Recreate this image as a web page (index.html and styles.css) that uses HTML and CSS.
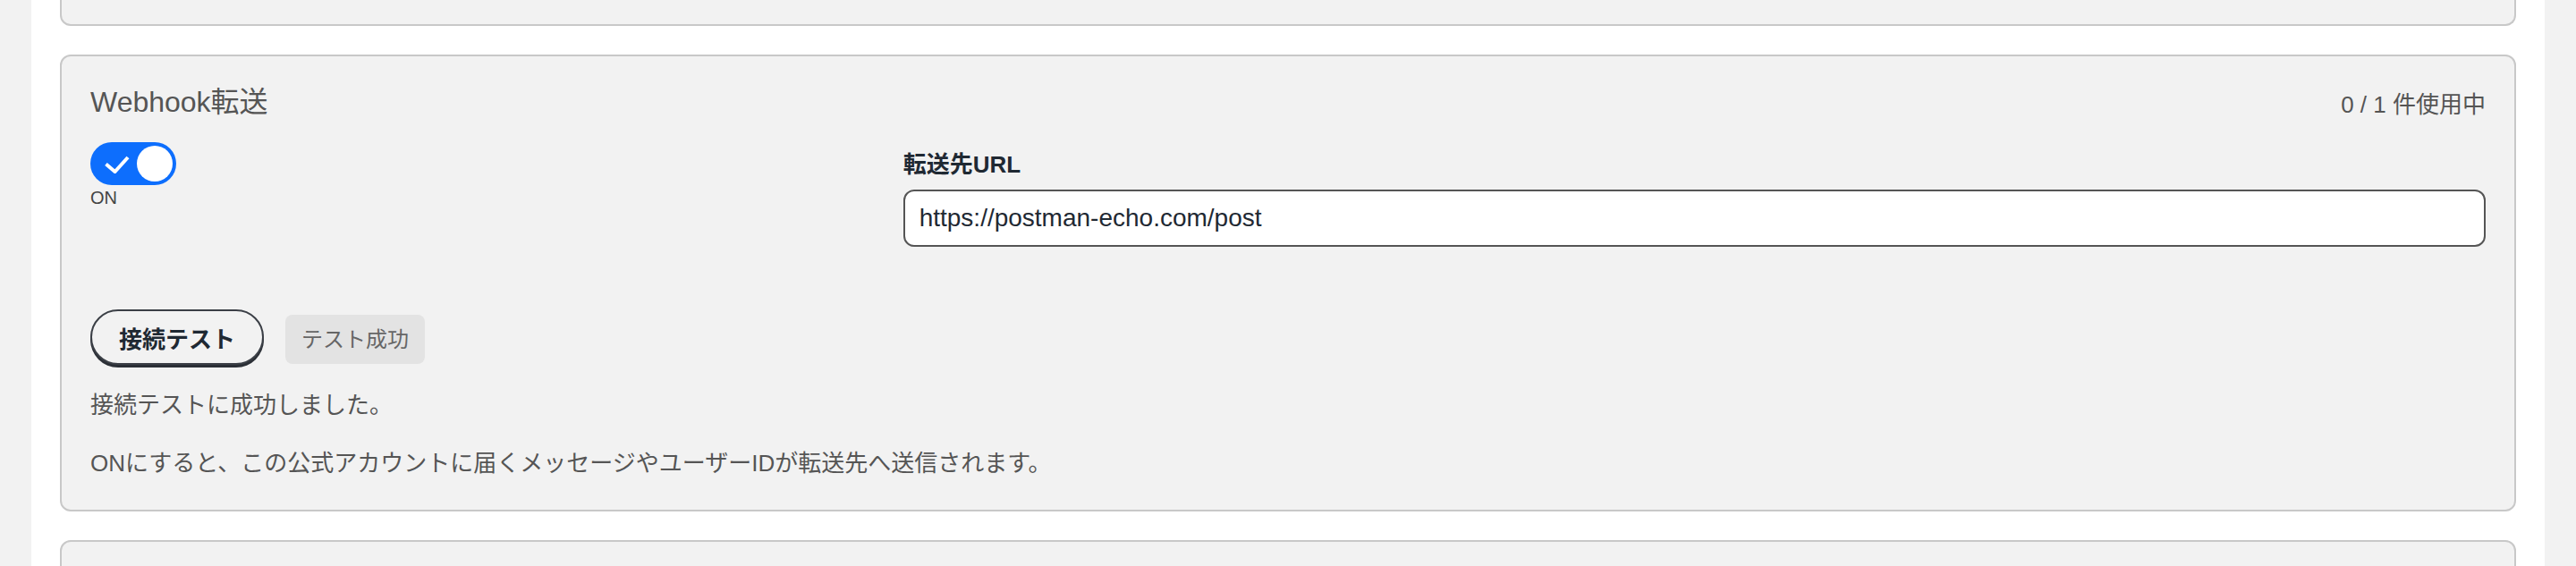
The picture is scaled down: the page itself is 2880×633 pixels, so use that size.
FILE: index.html
```html
<!DOCTYPE html>
<html lang="ja">
<head>
<meta charset="utf-8">
<title>Webhook転送</title>
<link rel="stylesheet" href="styles.css">
</head>
<body>
<div class="page">
  <div class="card card-prev"></div>

  <section class="card webhook">
    <header class="card-head">
      <h2 class="card-title">Webhook転送</h2>
      <span class="usage">0 / 1 件使用中</span>
    </header>

    <div class="settings">
      <div class="toggle-col">
        <span class="toggle" role="switch" aria-checked="true">
          <svg class="check" viewBox="0 0 28 20" width="28" height="20" aria-hidden="true">
            <polyline points="1.5,9.5 11.5,18 26,2" fill="none" stroke="#fff" stroke-width="4"/>
          </svg>
          <span class="knob"></span>
        </span>
        <span class="toggle-label">ON</span>
      </div>

      <div class="url-col">
        <label class="field-label" for="url">転送先URL</label>
        <input id="url" class="url-input" type="text" value="https://postman-echo.com/post">
      </div>
    </div>

    <div class="test-row">
      <button class="btn-test" type="button">接続テスト</button>
      <span class="badge">テスト成功</span>
    </div>

    <p class="result">接続テストに成功しました。</p>
    <p class="note">ONにすると、この公式アカウントに届くメッセージやユーザーIDが転送先へ送信されます。</p>
  </section>

  <div class="card card-next"></div>
</div>
</body>
</html>
```
FILE: styles.css
```css
html, body {
  margin: 0;
  height: 100%;
}

body {
  background: #f2f2f2;
  font-family: "Liberation Sans", "Noto Sans CJK JP", sans-serif;
  overflow: hidden;
}

.page {
  margin: 0 35px;
  padding: 0 32px;
  min-height: 633px;
  box-sizing: border-box;
  background: #fff;
  display: flex;
  flex-direction: column;
  gap: 32px;
}

.card {
  background: #f2f2f2;
  border: 2px solid #c8c8c8;
  border-radius: 12px;
}

.card-prev {
  height: 27px;
  border-top: none;
  border-radius: 0 0 12px 12px;
  flex-shrink: 0;
}

.card-next {
  height: 120px;
  flex-shrink: 0;
}

.webhook {
  padding: 32px;
  flex-shrink: 0;
}

.card-head {
  display: flex;
  justify-content: space-between;
  align-items: center;
}

.card-title {
  margin: 0;
  font-size: 32px;
  line-height: 38px;
  font-weight: 400;
  color: #555;
}

.usage {
  font-size: 26px;
  color: #555;
}

.settings {
  margin-top: 26px;
  display: grid;
  grid-template-columns: 1fr 2fr;
  gap: 24px;
}

.toggle-col {
  display: flex;
  flex-direction: column;
  align-items: flex-start;
}

.toggle {
  width: 96px;
  height: 48px;
  box-sizing: border-box;
  border-radius: 24px;
  background: #0d6efd;
  display: flex;
  align-items: center;
  justify-content: space-between;
  padding: 0 4px 0 16px;
}

.check {
  display: block;
  margin-top: 1px;
}

.knob {
  width: 40px;
  height: 40px;
  border-radius: 50%;
  background: #fff;
}

.toggle-label {
  font-size: 20px;
  line-height: 28px;
  color: #444;
}

.url-col {
  display: flex;
  flex-direction: column;
}

.field-label {
  margin-top: 6px;
  font-size: 26px;
  line-height: 39px;
  font-weight: 700;
  color: #1f2933;
}

.url-input {
  margin-top: 8px;
  width: 100%;
  height: 64px;
  box-sizing: border-box;
  border: 2px solid #555;
  border-radius: 12px;
  background: #fff;
  padding: 0 16px;
  font-family: "Liberation Sans", "Noto Sans CJK JP", sans-serif;
  font-size: 28px;
  color: #1f2933;
}

.test-row {
  margin-top: 70px;
  display: flex;
  align-items: flex-start;
  gap: 24px;
}

.btn-test {
  height: 62px;
  padding: 0 30px;
  border: 2px solid #3b3f46;
  border-radius: 31px;
  background: #f2f2f2;
  box-shadow: 0 3px 0 #2b2f36;
  font-family: "Liberation Sans", "Noto Sans CJK JP", sans-serif;
  font-size: 26px;
  font-weight: 700;
  color: #1f2933;
}

.badge {
  margin-top: 6px;
  height: 55px;
  line-height: 55px;
  padding: 0 18px;
  border-radius: 8px;
  background: #e3e3e3;
  font-size: 24px;
  color: #666;
}

.result,
.note {
  margin: 0;
  font-size: 26px;
  line-height: 39px;
  color: #555;
}

.result {
  margin-top: 26px;
}

.note {
  margin-top: 26px;
}
```
